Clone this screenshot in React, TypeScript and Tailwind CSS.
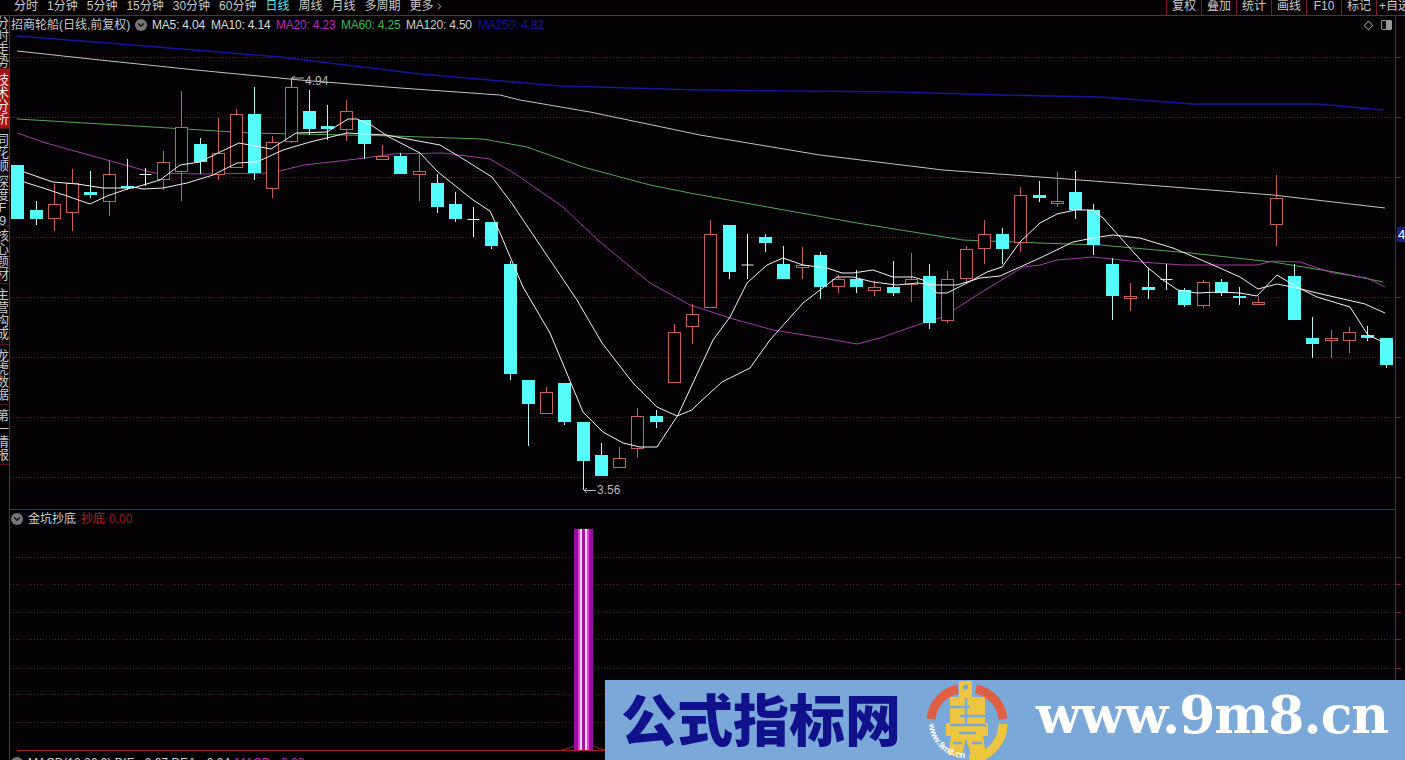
import { ChevronDown, ChevronRight } from "lucide-react";

// [center x, high, body top, body bottom, low, kind] in page pixels
type Candle = [number, number, number, number, number, "r" | "c" | "w"];

const candles: Candle[] = [
  [17.5, 165, 165, 219, 219, "c"], [36, 201, 210, 219, 225, "c"], [54.5, 184, 204, 219, 231, "r"],
  [72.5, 169, 183, 213, 231, "r"], [90.5, 171, 192, 195, 198, "c"], [109, 160, 174, 202, 216, "r"],
  [127, 159, 186, 188, 190, "c"], [145.5, 168, 174, 174, 186, "w"], [163, 151, 162, 180, 190, "r"],
  [181, 91, 127, 172, 201, "r"], [200, 138, 144, 162, 174, "c"], [218, 118, 153, 175, 180, "r"],
  [236, 109, 114, 168, 168, "r"], [254.5, 87, 114, 173, 180, "c"], [272.5, 136, 142, 189, 198, "r"],
  [291.5, 78, 87, 142, 143, "r"], [309, 90, 111, 129, 135, "c"], [327, 105, 126, 129, 140, "c"],
  [346, 100, 111, 130, 141, "r"], [364, 120, 120, 144, 159, "c"], [382, 145, 156, 160, 160, "r"],
  [400.5, 153, 156, 174, 174, "c"], [419.5, 154, 171, 175, 201, "r"], [437.5, 174, 183, 207, 213, "c"],
  [455.5, 192, 204, 219, 222, "c"], [473, 207, 219, 219, 237, "w"], [491.5, 222, 222, 246, 249, "c"],
  [510, 261, 264, 374, 380, "c"], [528.5, 380, 380, 404, 446, "c"], [546.5, 387, 392, 414, 414, "r"],
  [564.5, 383, 383, 422, 425, "c"], [583.5, 422, 422, 461, 490, "c"], [601.5, 443, 455, 476, 476, "c"],
  [619.5, 447, 458, 468, 468, "r"], [637.5, 408, 416, 449, 458, "r"], [656.5, 410, 416, 422, 428, "c"],
  [674.5, 324, 332, 383, 383, "r"], [692.5, 304, 314, 327, 344, "r"], [710.5, 220, 234, 308, 308, "r"],
  [729, 225, 225, 272, 279, "c"], [747, 234, 264.5, 264.5, 279, "w"], [765.5, 234, 237, 243, 252, "c"],
  [783.5, 246, 264, 279, 279, "c"], [802, 247, 265, 268, 279, "r"], [820, 252, 255, 287, 299, "c"],
  [838.5, 275, 279, 287, 293, "r"], [856.5, 270, 279, 287, 293, "c"], [874.5, 281, 287, 291, 296, "r"],
  [893, 261, 287, 293, 296, "c"], [911.5, 253, 279, 285, 302, "r"], [929.5, 264, 276, 323, 329, "c"],
  [947.5, 271, 279, 321, 323, "r"], [966, 246, 249, 279, 283, "r"], [984.5, 220, 234, 249, 264, "r"],
  [1002.5, 228, 234, 249, 264, "c"], [1020.5, 187, 195, 243, 252, "r"], [1039, 181, 195, 198, 202, "c"],
  [1057, 172, 201, 204, 207, "r"], [1075.5, 171, 192, 210, 219, "c"], [1093.5, 204, 210, 245, 255, "c"],
  [1112.5, 258, 264, 296, 320, "c"], [1130.5, 283, 296, 299, 311, "r"], [1148.5, 268, 287, 290, 299, "c"],
  [1166.5, 264, 279, 279, 290, "w"], [1184.5, 288, 290, 305, 307, "c"], [1203.5, 280, 282, 306, 308, "r"],
  [1221.5, 279, 282, 293, 296, "c"], [1239.5, 287, 296, 298, 305, "c"], [1258, 296, 302, 305, 305, "r"],
  [1276.5, 175, 198, 225, 246, "r"], [1294.5, 264, 276, 320, 320, "c"], [1312.5, 317, 338, 344, 358, "c"],
  [1331, 330, 338, 341, 358, "r"], [1349, 327, 332, 341, 353, "r"], [1367.5, 326, 335, 338, 341, "c"],
  [1386, 338, 338, 365, 368, "c"],
];

const ma5 = "24,172 53,182 77,184 103,188 133,188 160,180 180,165 200,162 220,152 239,143 271,149 296,133 327,132 348,119 357,119 371,125 389,137 420,153 438,172 473,200 490,211 500,233 523,287 550,333 583,412 603,432 623,443 640,447 657,447 678,415 713,340 730,317 747,283 767,265 783,258 803,265 827,268 842,273 853,273 873,270 893,277 913,277 923,280 937,293 947,293 967,283 987,272 1002,267 1020,242 1040,223 1057,214 1075,210 1093,210 1103,218 1127,245 1147,267 1163,280 1178,290 1197,293 1220,292 1240,293 1257,296 1277,275 1297,287 1317,297 1350,307 1368,335 1383,342";
const ma10 = "24,182 43,188 67,196 90,204 107,196 133,187 143,189 163,188 187,183 213,175 237,163 257,162 283,150 310,142 347,133 386,135 440,145 460,157 492,177 513,205 550,260 577,300 602,343 633,383 657,407 677,416 692,410 700,402 722,382 750,368 770,340 803,303 837,277 853,277 873,282 897,285 917,283 937,285 957,285 980,278 1000,276 1040,258 1073,242 1093,238 1113,235 1140,238 1173,248 1213,265 1240,277 1258,289 1277,284 1297,288 1317,293 1365,304 1385,313";
const ma20 = "17,133 46,143 107,160 154,173 204,174 271,173 304,165 357,159 393,154 443,153 490,159 517,175 563,207 600,242 650,283 690,305 730,318 773,330 823,338 857,344 880,338 923,323 943,317 977,295 1023,267 1040,265 1057,260 1093,257 1140,262 1183,265 1257,265 1273,261 1300,262 1333,273 1367,278 1385,287";
const ma60 = "17,119 136,126 250,133 393,136 483,139 527,147 583,167 650,185 690,193 773,208 857,223 963,240 1040,243 1100,245 1190,253 1273,262 1340,273 1383,282";
const ma120 = "17,51 100,60 196,70 300,80 400,88 500,95 520,100 590,112 700,135 820,155 943,170 1040,177 1173,187 1273,195 1385,208";
const ma250 = "17,36 120,44 280,57 420,74 560,86 700,90 900,92 1000,95 1100,97 1193,104 1317,104 1383,110";

const upperGrid = [57, 117, 177, 237, 297, 357, 417, 477];
const lowerGrid = [557, 584, 612, 639, 668, 694, 722];
const sideTabs = [
  { text: "分时走势", h: 53 },
  { text: "技术分析", h: 60, active: true },
  { text: "同花顺", h: 47 },
  { text: "深度F9", h: 50 },
  { text: "核心题材", h: 58 },
  { text: "主营构成", h: 61 },
  { text: "龙虎数据", h: 60 },
  { text: "第一情报", h: 60 },
];
const periods = ["分时", "1分钟", "5分钟", "15分钟", "30分钟", "60分钟", "日线", "周线", "月线", "多周期"];
const tools = ["复权", "叠加", "统计", "画线", "F10", "标记"];
const legend = [
  { label: "MA5: 4.04", cls: "text-[#dcdcdc] w-[59px]" },
  { label: "MA10: 4.14", cls: "text-[#dcdcdc] w-[65px]" },
  { label: "MA20: 4.23", cls: "text-[#b52cb8] w-[65px]" },
  { label: "MA60: 4.25", cls: "text-[#38bc54] w-[65px]" },
  { label: "MA120: 4.50", cls: "text-[#d0d0d0] w-[72px]" },
  { label: "MA250: 4.82", cls: "text-[#16169e] w-[70px]" },
];

function Dot() {
  return (
    <span className="flex h-3 w-3 shrink-0 items-center justify-center rounded-full bg-[#77777a]">
      <ChevronDown size={10} strokeWidth={3} className="text-[#111]" />
    </span>
  );
}

function GridLines({ rows }: { rows: number[] }) {
  return (
    <>
      {rows.map((y) => (
        <line key={y} x1={10} x2={1395} y1={y + 0.5} y2={y + 0.5} stroke="#5c2020" strokeDasharray="1 2" />
      ))}
    </>
  );
}

function CandleMark({ c }: { c: Candle }) {
  const [x, high, top, bottom, low, kind] = c;
  const cx = Math.floor(x) + 0.5;
  if (kind === "w") {
    return (
      <g stroke="#f2f2f2">
        <line x1={cx} x2={cx} y1={high} y2={low} />
        <line x1={cx - 6} x2={cx + 6} y1={top + 0.5} y2={top + 0.5} />
      </g>
    );
  }
  if (kind === "c") {
    return (
      <g>
        <line x1={cx} x2={cx} y1={high} y2={low} stroke="#b8f4f4" />
        <rect x={cx - 6.5} y={top} width={13} height={bottom - top} fill="#54fcfc" />
      </g>
    );
  }
  return (
    <g stroke="#c8605c">
      <line x1={cx} x2={cx} y1={high} y2={top} />
      <line x1={cx} x2={cx} y1={bottom} y2={low} />
      <rect x={cx - 6} y={top + 0.5} width={12} height={Math.max(bottom - top - 1, 1)} fill="#000" />
    </g>
  );
}

function CoinLogo() {
  return (
    <svg width="82" height="80" viewBox="0 0 82 80" className="shrink-0">
      <path d="M32 9 A34 34 0 0 0 5 39" fill="none" stroke="#df5f45" strokeWidth="9" />
      <path d="M50 9 A34 34 0 0 1 77 39" fill="none" stroke="#df5f45" strokeWidth="9" />
      <path d="M77 44 A35 35 0 0 1 43 79" fill="none" stroke="#eec53f" strokeWidth="9" />
      <path
        fill="#eec53f"
        d="M33 1 H46 V17 H59 V43 H62 V56 H57 L60 75 H45 L40 58 L36 75 H22 L25 56 H20 V43 H24 V17 H33 Z"
      />
      <circle cx="39.5" cy="7" r="2.6" fill="#7aa8d8" />
      <g stroke="#7aa8d8" strokeWidth="2.4" fill="none">
        <path d="M24 27 H44 M34 36 H59 M24 45 H60 M33 53 H50 M27 63 H36 M46 63 H56" />
        <path d="M40 18 V44" />
      </g>
      <defs>
        <path id="coin-arc" d="M3 44 A37 37 0 0 0 37 78" />
      </defs>
      <text fill="#fff" fontSize="9" fontWeight="700" fontFamily="'Liberation Sans', sans-serif">
        <textPath href="#coin-arc">www.9m8.cn</textPath>
      </text>
    </svg>
  );
}

export default function App() {
  return (
    <div className="relative flex h-[760px] w-[1405px] flex-col overflow-hidden bg-[#030103] font-['Liberation_Sans','Noto_Sans_CJK_SC',sans-serif] text-[12px] text-[#c9c9c9]">
      {/* top toolbar */}
      <div className="flex h-4 shrink-0 items-start justify-between border-b border-[#94191f] leading-[12px]">
        <div className="flex gap-[9px] pl-[14px]">
          {periods.map((p) => (
            <span key={p} className={p === "日线" ? "text-[#5fe6e6]" : ""}>
              {p}
            </span>
          ))}
          <span className="flex items-center">
            更多
            <ChevronRight size={11} />
          </span>
        </div>
        <div className="flex h-[15px]">
          {tools.map((t) => (
            <span key={t} className="w-[35px] border-l border-[#7c1a1f] text-center">
              {t}
            </span>
          ))}
          <span className="w-[29px] overflow-hidden whitespace-nowrap border-l border-[#7c1a1f] pl-[2px]">+自选</span>
        </div>
      </div>

      <div className="flex min-h-0 flex-1">
        {/* clipped side tabs */}
        <div className="flex w-[10px] shrink-0 flex-col overflow-hidden border-r border-[#94191f]">
          {sideTabs.map((t) => (
            <div
              key={t.text}
              style={{ height: t.h }}
              className={`flex shrink-0 flex-col items-start justify-center overflow-hidden border-b border-[#5c1418] text-[13px] leading-[13px] ${t.active ? "bg-[#a80f16] text-[#eeeeee]" : ""}`}
            >
              {t.text.split("").map((ch, i) => (
                <span key={i} className="-ml-[4px] w-[13px] shrink-0 text-center">
                  {ch}
                </span>
              ))}
            </div>
          ))}
        </div>

        {/* chart panes */}
        <div className="flex w-[1386px] shrink-0 flex-col border-r border-[#94191f]">
          <div className="flex h-[494px] shrink-0 flex-col border-b border-[#94191f]">
            <div className="flex h-[18px] shrink-0 items-center justify-between pl-px pr-[3px]">
              <div className="flex items-center">
                <span className="w-[124px] whitespace-nowrap">招商轮船(日线,前复权)</span>
                <Dot />
                <div className="ml-[5px] flex whitespace-nowrap tracking-[-0.2px]">
                  {legend.map((m) => (
                    <span key={m.label} className={m.cls}>
                      {m.label}
                    </span>
                  ))}
                </div>
              </div>
              <div className="flex items-center gap-[9px]">
                <span className="h-[7px] w-[7px] rotate-45 border border-[#888]" />
                <span className="flex h-[10px] w-[11px] justify-end rounded-[1px] border border-[#999]">
                  <span className="w-[5px] bg-[#999]" />
                </span>
              </div>
            </div>
            <svg width="1385" height="475" viewBox="10 34 1385 475" className="block" fill="none">
              <GridLines rows={upperGrid} />
              <polyline points={ma250} stroke="#1616a0" strokeWidth="1.4" />
              <polyline points={ma120} stroke="#c4c4c4" />
              <polyline points={ma60} stroke="#56a656" />
              <polyline points={ma20} stroke="#a23ca6" />
              {candles.map((c) => (
                <CandleMark key={c[0]} c={c} />
              ))}
              <polyline points={ma10} stroke="#f0f0f0" />
              <polyline points={ma5} stroke="#f6f6f6" />
              <path d="M291.5 78 V87 M292 78 H304 M292 78 l3 -2 M292 78 l3 2" stroke="#b8b8b8" />
              <text x="305" y="85" fill="#b8b8b8" fontSize="12" fontFamily="'Liberation Sans', sans-serif">
                4.94
              </text>
              <path d="M584 490.5 H596 M584 490.5 l3 -2.5 M584 490.5 l3 2.5" stroke="#b8b8b8" />
              <text x="597" y="494" fill="#b8b8b8" fontSize="12" fontFamily="'Liberation Sans', sans-serif">
                3.56
              </text>
            </svg>
          </div>

          <div className="flex h-[17px] shrink-0 items-center gap-[5px] pl-[1px]">
            <Dot />
            <span className="text-[#d4d4d4]">金坑抄底</span>
            <span className="text-[#c81e1e]">抄底</span>
            <span className="-ml-[1px] text-[#9a1c1c]">0.00</span>
          </div>
          <svg width="1385" height="226" viewBox="10 527 1385 226" className="block shrink-0" fill="none">
            <GridLines rows={lowerGrid} />
            <path d="M561 750 Q572 748 575 745 M592 745 Q596 748 605 750" stroke="#8a3030" />
            <rect x="574" y="529" width="19" height="221" fill="#970f98" />
            <rect x="578" y="529" width="2" height="221" fill="#e23fe2" />
            <rect x="580" y="529" width="2" height="221" fill="#ffd8ff" />
            <rect x="582" y="529" width="3" height="221" fill="#a316a3" />
            <rect x="585" y="529" width="2" height="221" fill="#ffd8ff" />
            <rect x="587" y="529" width="2" height="221" fill="#e23fe2" />
            <line x1="17" x2="1395" y1="750.5" y2="750.5" stroke="#a01e24" />
          </svg>
          <div className="mt-[3px] flex items-center gap-[5px] whitespace-nowrap pl-px leading-[14px]">
            <Dot />
            <span className="text-[#d4d4d4]">MACD(12,26,9) DIF: -0.07 DEA: -0.04</span>
            <span className="text-[#c02cc4]">MACD: -0.03</span>
          </div>
        </div>

        {/* price axis ticks */}
        <div className="relative flex-1">
          <svg width="9" height="744" viewBox="1396 16 9 744" className="block" stroke="#94191f">
            {[...upperGrid, ...lowerGrid].map((y) => (
              <line key={y} x1={1396} x2={1401} y1={y + 0.5} y2={y + 0.5} />
            ))}
          </svg>
          <span className="absolute left-px top-[211px] h-[15px] w-2 overflow-hidden bg-[#1c1c8c] pl-px text-[13px] leading-[15px] text-white">
            4
          </span>
        </div>
      </div>

      {/* watermark banner over the chart */}
      <div className="absolute bottom-0 right-0 flex h-[80px] w-[800px] items-center bg-[#7aa8d8]">
        <span className="mb-[6px] ml-[16px] w-[305px] shrink-0 whitespace-nowrap font-['Noto_Sans_CJK_SC',sans-serif] text-[56px] font-black leading-none text-[#11118c]">
          公式指标网
        </span>
        <CoinLogo />
        <span className="mb-[10px] ml-[28px] shrink-0 whitespace-nowrap font-['DejaVu_Serif',serif] text-[52px] font-bold leading-none tracking-[-1px] text-white">
          www.9m8.cn
        </span>
      </div>
    </div>
  );
}
